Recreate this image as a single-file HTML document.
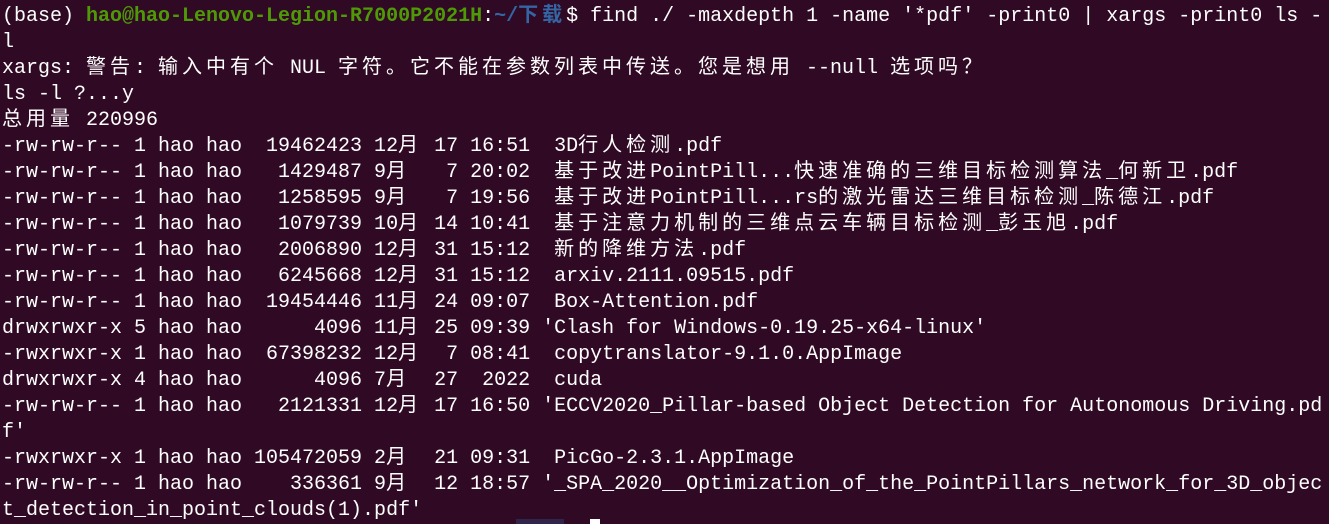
<!DOCTYPE html>
<html><head><meta charset="utf-8">
<style>
html,body{margin:0;padding:0;background:#300a24;width:1329px;height:524px;overflow:hidden}
#t{position:absolute;left:2px;top:4px;font-family:"Liberation Mono","Noto Sans CJK SC",monospace;font-size:20px;line-height:26px;color:#ffffff}
#t div{height:26px;white-space:pre;overflow:visible}
.c{letter-spacing:4px;font-family:"Noto Sans CJK SC","WenQuanYi Zen Hei",sans-serif;line-height:0}
.g{color:#4e9a06;font-weight:bold}
.b{color:#3465a4;font-weight:bold}
#bot{position:absolute;left:516px;top:519px;width:48px;height:5px;background:#3465a4;opacity:.3}
#cur{position:absolute;left:590px;top:519px;width:10px;height:5px;background:#fff}
</style></head><body>
<div id="t">
<div>(base) <span class="g">hao@hao-Lenovo-Legion-R7000P2021H</span>:<span class="b">~/<span class="c">下载</span></span>$ find ./ -maxdepth 1 -name '*pdf' -print0 | xargs -print0 ls -</div>
<div>l</div>
<div>xargs: <span class="c">警告</span>: <span class="c">输入中有个</span> NUL <span class="c">字符。它不能在参数列表中传送。您是想用</span> --null <span class="c">选项吗？</span></div>
<div>ls -l ?...y</div>
<div><span class="c">总用量</span> 220996</div>
<div>-rw-rw-r-- 1 hao hao  19462423 12<span class="c">月</span> 17 16:51  3D<span class="c">行人检测</span>.pdf</div>
<div>-rw-rw-r-- 1 hao hao   1429487 9<span class="c">月</span>   7 20:02  <span class="c">基于改进</span>PointPill...<span class="c">快速准确的三维目标检测算法</span>_<span class="c">何新卫</span>.pdf</div>
<div>-rw-rw-r-- 1 hao hao   1258595 9<span class="c">月</span>   7 19:56  <span class="c">基于改进</span>PointPill...rs<span class="c">的激光雷达三维目标检测</span>_<span class="c">陈德江</span>.pdf</div>
<div>-rw-rw-r-- 1 hao hao   1079739 10<span class="c">月</span> 14 10:41  <span class="c">基于注意力机制的三维点云车辆目标检测</span>_<span class="c">彭玉旭</span>.pdf</div>
<div>-rw-rw-r-- 1 hao hao   2006890 12<span class="c">月</span> 31 15:12  <span class="c">新的降维方法</span>.pdf</div>
<div>-rw-rw-r-- 1 hao hao   6245668 12<span class="c">月</span> 31 15:12  arxiv.2111.09515.pdf</div>
<div>-rw-rw-r-- 1 hao hao  19454446 11<span class="c">月</span> 24 09:07  Box-Attention.pdf</div>
<div>drwxrwxr-x 5 hao hao      4096 11<span class="c">月</span> 25 09:39 'Clash for Windows-0.19.25-x64-linux'</div>
<div>-rwxrwxr-x 1 hao hao  67398232 12<span class="c">月</span>  7 08:41  copytranslator-9.1.0.AppImage</div>
<div>drwxrwxr-x 4 hao hao      4096 7<span class="c">月</span>  27  2022  cuda</div>
<div>-rw-rw-r-- 1 hao hao   2121331 12<span class="c">月</span> 17 16:50 'ECCV2020_Pillar-based Object Detection for Autonomous Driving.pd</div>
<div>f'</div>
<div>-rwxrwxr-x 1 hao hao 105472059 2<span class="c">月</span>  21 09:31  PicGo-2.3.1.AppImage</div>
<div>-rw-rw-r-- 1 hao hao    336361 9<span class="c">月</span>  12 18:57 '_SPA_2020__Optimization_of_the_PointPillars_network_for_3D_objec</div>
<div>t_detection_in_point_clouds(1).pdf'</div>
</div>
<div id="bot"></div><div id="cur"></div>
</body></html>
